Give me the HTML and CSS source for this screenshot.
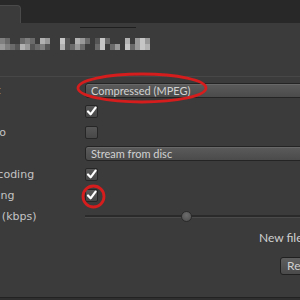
FILE: index.html
```html
<!DOCTYPE html>
<html lang="en">
<head>
<meta charset="UTF-8" />
<meta name="viewport" content="width=device-width, initial-scale=1" />
<title>Audio Importer</title>
<link rel="stylesheet" href="styles.css">
</head>
<body>

<div class="topbar"><div class="tab"></div></div>

<div class="header">
  <div class="rule"></div>
  <!-- blurred out file name -->
  <div class="mosaic">
    <i class="s3"></i><i class="s4"></i>
    <i class="s2"></i><i class="s3"></i>
    <i></i><i class="s2"></i>
    <i></i><i class="s1"></i>
    <i class="s2"></i><i class="s5"></i>
    <i class="s3"></i><i class="s4"></i>
    <i class="s2"></i><i class="s1"></i>
    <i></i><i class="s2"></i>
    <i class="s5"></i><i class="s3"></i>
    <i class="s4"></i><i class="s1"></i>
    <i></i><i></i>
    <i></i><i></i>
    <i class="s6"></i><i class="s5"></i>
    <i class="s1"></i><i class="s1"></i>
    <i></i><i class="s2"></i>
    <i class="s5"></i><i class="s4"></i>
    <i class="s4"></i><i class="s2"></i>
    <i class="s2"></i><i></i>
    <i></i><i></i>
    <i class="s1"></i><i class="s2"></i>
    <i class="s6"></i><i class="s6"></i>
    <i class="s2"></i><i></i>
    <i></i><i class="s2"></i>
    <i></i><i class="s4"></i>
    <i></i><i></i>
    <i class="s5"></i><i class="s6"></i>
    <i></i><i class="s2"></i>
    <i class="s4"></i><i class="s4"></i>
    <i class="s6"></i><i class="s6"></i>
    <i class="s4"></i><i class="s5"></i>
  </div>
</div>

<div class="inspector">
  <div class="row">
    <span class="label">Audio Format</span>
    <div class="popup">Compressed (MPEG)</div>
  </div>
  <div class="row">
    <span class="label">3D Sound</span>
    <div class="check on"><svg viewBox="0 0 11 11"><path d="M2 5.5 L4.6 8.3 L9.6 1.6" /></svg></div>
  </div>
  <div class="row">
    <span class="label">Force to mono</span>
    <div class="check"></div>
  </div>
  <div class="row">
    <span class="label">Load type</span>
    <div class="popup">Stream from disc</div>
  </div>
  <div class="row">
    <span class="label">Hardware decoding</span>
    <div class="check on"><svg viewBox="0 0 11 11"><path d="M2 5.5 L4.6 8.3 L9.6 1.6" /></svg></div>
  </div>
  <div class="row">
    <span class="label">Gapless looping</span>
    <div class="check on"><svg viewBox="0 0 11 11"><path d="M2 5.5 L4.6 8.3 L9.6 1.6" /></svg></div>
  </div>
  <div class="row">
    <span class="label">Compression (kbps)</span>
    <div class="slider"><div class="thumb"></div></div>
  </div>
  <div class="row">
    <span class="label"></span>
    <span class="size">New file size: 1.8 MB</span>
  </div>
</div>

<div class="actions">
  <div class="button">Revert</div>
  <div class="button">Apply</div>
</div>

<div class="footer"></div>

<!-- red marks drawn over the screenshot -->
<svg class="marks" viewBox="0 0 300 300">
  <ellipse cx="142" cy="88" rx="64" ry="14" />
  <circle cx="93.5" cy="196.5" r="10.5" />
</svg>

</body>
</html>
```

FILE: styles.css
```css
body {
  margin: 0;
  width: 300px;
  height: 300px;
  overflow: hidden;
  position: relative;
  background: #3b3b3b;
  font-family: Lato, "DejaVu Sans", sans-serif;
  font-size: 12px;
  color: #c4c4c4;
}

.topbar {
  height: 23px;
  background: #282828;
  display: flex;
  align-items: flex-end;
}
.tab {
  width: 21px;
  height: 18px;
  box-sizing: border-box;
  background: #3b3b3b;
  border-top: 1px solid #4a4a4a;
  border-right: 1px solid #4a4a4a;
  border-top-right-radius: 4px;
}

.header {
  height: 54px;
  box-sizing: border-box;
  padding-top: 4px;
  border-bottom: 1px solid #474747;
}
.rule {
  margin-left: 80px;
  width: 56px;
  height: 1px;
  background: #1f1f1f;
}

/* Mosaico do nome */
.mosaic {
  margin-top: 10px;
  display: grid;
  grid-template-columns: repeat(30, 5px);
  grid-template-rows: 6px 6px;
  grid-auto-flow: column;
}
.mosaic i { display: block; }
.mosaic .s1 { background: #555; }
.mosaic .s2 { background: #6a6a6a; }
.mosaic .s3 { background: #808080; }
.mosaic .s4 { background: #999; }
.mosaic .s5 { background: #b2b2b2; }
.mosaic .s6 { background: #c6c6c6; }

.inspector {
  margin-left: -73px;
  width: 480px;
  padding-top: 3px;
}

.row {
  display: grid;
  grid-template-columns: 158px 1fr;
  align-items: center;
  height: 21px;
}
.label {
  white-space: nowrap;
  font-family: "DejaVu Sans", sans-serif;
  font-size: 11px;
}

.popup {
  height: 15px;
  box-sizing: border-box;
  border: 1px solid #242424;
  border-radius: 3px;
  background: linear-gradient(#5b5b5b, #4b4b4b);
  box-shadow: inset 0 1px 0 #686868;
  padding-left: 5px;
  font-size: 11px;
  line-height: 13px;
  color: #d2d2d2;
}

.check {
  width: 13px;
  height: 13px;
  box-sizing: border-box;
  border: 1px solid #262626;
  border-radius: 2px;
  background: linear-gradient(#575757, #474747);
  display: flex;
  align-items: center;
  justify-content: center;
}
.check svg {
  width: 11px;
  height: 11px;
}
.check path {
  fill: none;
  stroke: #fff;
  stroke-width: 2.2;
  stroke-linecap: round;
  stroke-linejoin: round;
}

.slider {
  height: 11px;
  background: linear-gradient(to bottom, transparent 4px, #2a2a2a 4px, #2a2a2a 6px, #4a4a4a 6px, #4a4a4a 7px, transparent 7px);
}
.thumb {
  width: 11px;
  height: 11px;
  margin-left: 96px;
  box-sizing: border-box;
  border-radius: 50%;
  border: 1px solid #2a2a2a;
  background: radial-gradient(circle at 50% 35%, #6c6c6c, #4c4c4c);
}

.size {
  padding-left: 174px;
  white-space: nowrap;
  color: #cfcfcf;
}

.actions {
  display: flex;
  gap: 4px;
  margin-top: 9px;
  padding-left: 280px;
}
.button {
  height: 18px;
  box-sizing: border-box;
  padding: 0 6px;
  border: 1px solid #202020;
  border-radius: 3px;
  background: linear-gradient(#5e5e5e, #4a4a4a);
  line-height: 16px;
  color: #d0d0d0;
  white-space: nowrap;
}

.footer {
  margin-top: 22px;
  height: 3px;
  border-top: 1px solid #222;
  background: #2f2f2f;
}

.marks {
  position: absolute;
  left: 0;
  top: 0;
  width: 300px;
  height: 300px;
  pointer-events: none;
}
.marks ellipse,
.marks circle {
  fill: none;
  stroke: #d51d1d;
  stroke-width: 2.8;
}
```
